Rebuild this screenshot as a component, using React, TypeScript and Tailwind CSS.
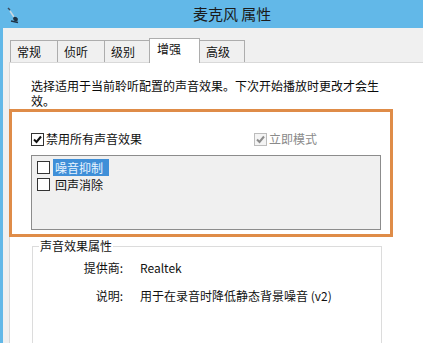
const font = { fontFamily: '"Noto Sans CJK SC", "Noto Sans", sans-serif' };

function Check({ checked, disabled }: { checked?: boolean; disabled?: boolean }) {
  return (
    <span
      className={
        'inline-flex h-[13px] w-[13px] shrink-0 items-center justify-center border ' +
        (disabled ? 'border-[#bcbcbc] bg-[#f4f4f4]' : 'border-[#333333] bg-white')
      }
    >
      {checked && (
        <svg width="11" height="11" viewBox="0 0 11 11">
          <path
            d="M2 5.5 L4.5 8 L9 2.5"
            fill="none"
            stroke={disabled ? '#8c8c8c' : '#111111'}
            strokeWidth="2"
          />
        </svg>
      )}
    </span>
  );
}

function MicIcon() {
  return (
    <svg width="14" height="18" viewBox="0 0 14 18">
      <path d="M2 2 L4 4" stroke="#3a4a5a" strokeWidth="1.5" />
      <path d="M4 5 L8 11" stroke="#c9d6df" strokeWidth="1.5" />
      <ellipse cx="9.5" cy="13" rx="2.6" ry="2" fill="#1f3346" transform="rotate(35 9.5 13)" />
      <path d="M5 15 L12 16.5" stroke="#1f3346" strokeWidth="1.6" />
    </svg>
  );
}

const tabs = [
  { label: '常规', w: 'w-[48px]' },
  { label: '侦听', w: 'w-[48px]' },
  { label: '级别', w: 'w-[47px]' },
];

export default function App() {
  return (
    <div
      className="flex h-[343px] w-[423px] flex-col overflow-hidden bg-[#62b8e8] text-[12px] text-[#111111]"
      style={font}
    >
      {/* Title bar */}
      <div className="flex h-[28px] shrink-0 items-center">
        <div className="ml-[6px] mt-[2px]">
          <MicIcon />
        </div>
        <div className="ml-[173px] text-[15px] leading-[18px] text-[#1b1b1b]">麦克风 属性</div>
      </div>

      {/* Window body */}
      <div className="ml-[3px] flex flex-1 flex-col bg-[#f0f0f0] pl-[6px] pt-[10px]">
        {/* Tabs */}
        <div className="relative z-10 flex h-[24px] items-end pl-[1px]">
          {tabs.map((t) => (
            <div
              key={t.label}
              className={
                t.w +
                ' -mr-px flex h-[22px] items-center border border-b-0 border-[#adadad] bg-[#f0f0f0] pl-[6px] leading-[14px]'
              }
            >
              {t.label}
            </div>
          ))}
          <div className="-mb-px -ml-[1px] flex h-[25px] w-[51px] items-start border border-b-0 border-[#adadad] bg-white pl-[7px] pt-[3px] leading-[14px]">
            增强
          </div>
          <div className="-ml-px flex h-[22px] w-[46px] items-center border border-b-0 border-[#adadad] bg-[#f0f0f0] pl-[6px] leading-[14px]">
            高级
          </div>
        </div>

        {/* Tab panel */}
        <div className="flex flex-1 flex-col border-l border-t border-[#d9d9d9] bg-white">
          <p className="w-[374px] pl-[21px] pt-[15px] leading-[15px] text-[#0a0a0a]">
            选择适用于当前聆听配置的声音效果。下次开始播放时更改才会生效。
          </p>

          {/* Highlighted effects section */}
          <div className="-ml-px mt-[1px] h-[128px] w-[384px] border-[3px] border-[#df8c48]">
            <div className="mt-[20px] flex h-[14px] items-center pl-[19px] leading-[14px]">
              <Check checked />
              <span className="ml-[2px]">禁用所有声音效果</span>
              <div className="ml-[112px] flex items-center">
                <Check checked disabled />
                <span className="ml-[2px] text-[#8a8a8a]">立即模式</span>
              </div>
            </div>
            <div className="ml-[19px] mt-[9px] h-[75px] w-[350px] border border-[#8c8c8c] bg-[#f0f0f0] pl-[5px] pt-[3px]">
              <div className="flex h-[17px] items-center">
                <Check />
                <span className="ml-[3px] flex h-[17px] w-[56px] items-center bg-[#3f8fd8] pl-[2px] leading-[14px] text-[#e8f4ff]">
                  噪音抑制
                </span>
              </div>
              <div className="flex h-[17px] items-center">
                <Check />
                <span className="ml-[5px] leading-[14px]">回声消除</span>
              </div>
            </div>
          </div>

          {/* Effect properties group */}
          <fieldset className="ml-[22px] mt-[2px] h-[140px] w-[350px] border border-[#dcdcdc]">
            <legend className="ml-[6px] px-px leading-[14px]">声音效果属性</legend>
            <div className="mt-[7px] grid grid-cols-[90px_1fr] gap-x-[17px] gap-y-[12px] leading-[16px]">
              <div className="text-right">提供商:</div>
              <div>Realtek</div>
              <div className="text-right">说明:</div>
              <div>用于在录音时降低静态背景噪音 (v2)</div>
            </div>
          </fieldset>
        </div>
      </div>
    </div>
  );
}
